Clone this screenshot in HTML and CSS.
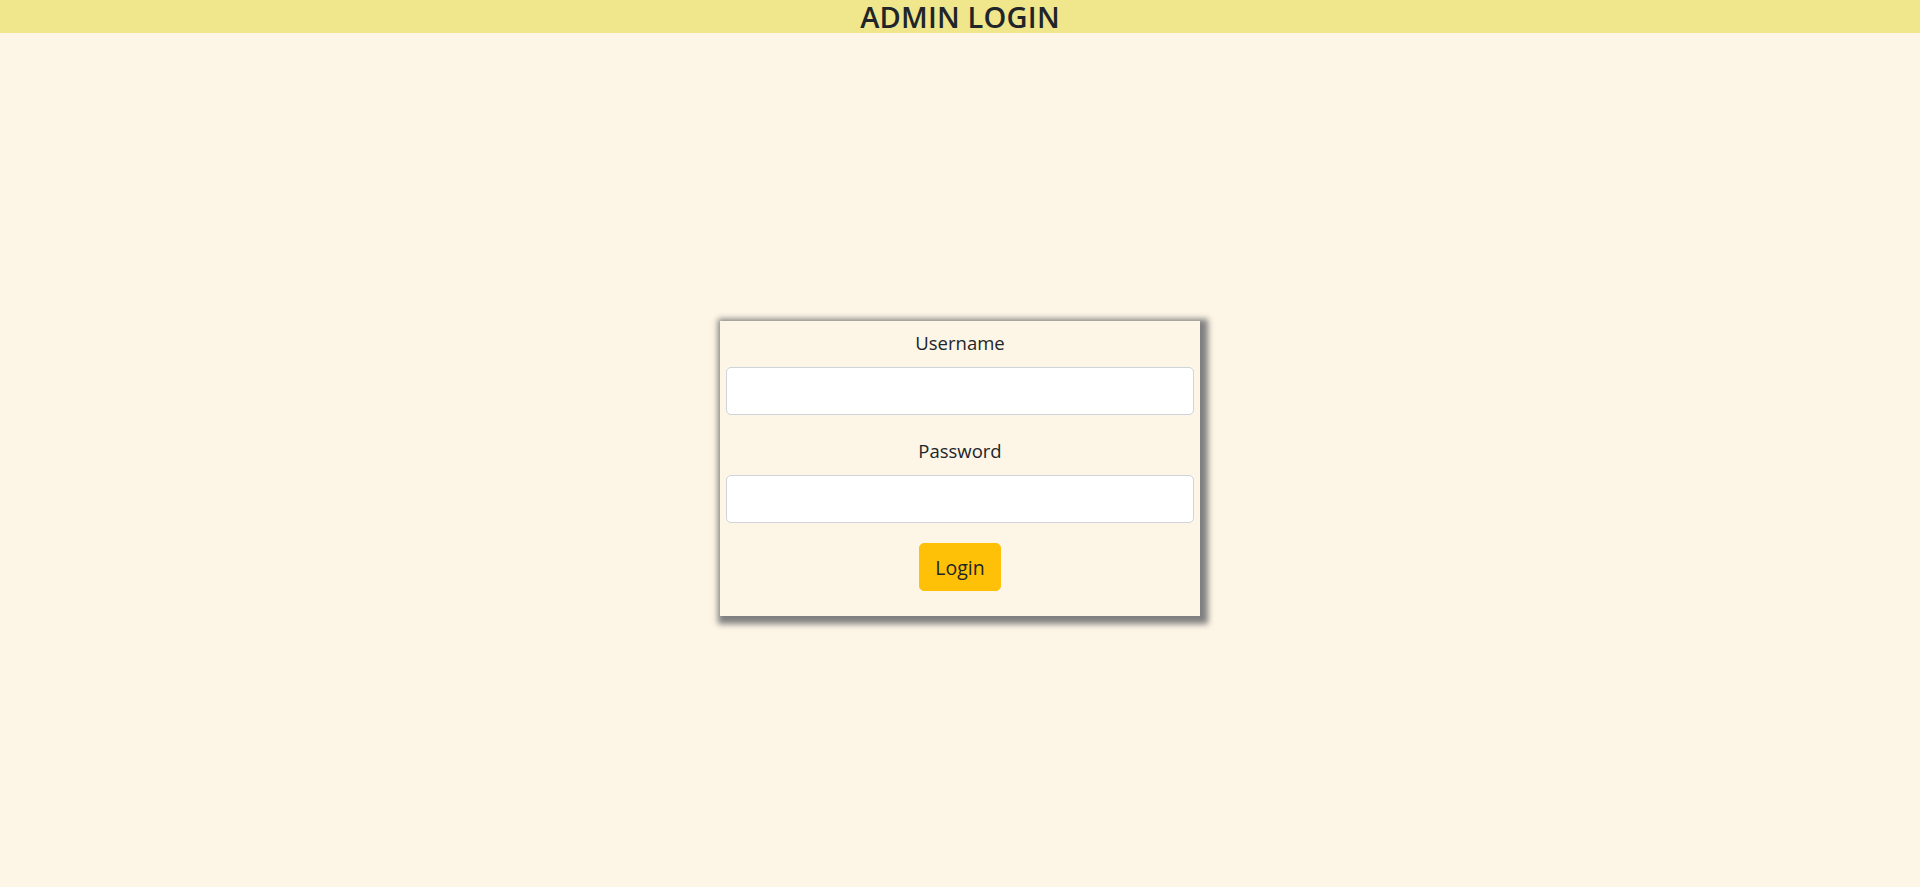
FILE: index.html
```html
<!DOCTYPE html>
<html lang="en">
<head>
<meta charset="utf-8">
<title>Admin Login</title>
<link rel="stylesheet" href="styles.css">
</head>
<body>
<header class="topbar">
  <h1 class="title">ADMIN LOGIN</h1>
</header>
<main class="stage">
  <form class="card">
    <div class="field">
      <label class="label" for="username">Username</label>
      <input class="input" id="username" type="text">
    </div>
    <div class="field">
      <label class="label" for="password">Password</label>
      <input class="input" id="password" type="password">
    </div>
    <div class="actions">
      <button class="btn" type="button">Login</button>
    </div>
  </form>
</main>
</body>
</html>
```

FILE: styles.css
```css
* { box-sizing: border-box; }
html, body { margin: 0; padding: 0; }
body {
  background: #fdf5e6;
  color: #212529;
  font-family: "Open Sans", "Noto Sans", sans-serif;
  min-height: 887px;
  display: flex;
  flex-direction: column;
}
.topbar {
  background: #f0e68c;
  height: 33px;
  display: flex;
  align-items: center;
  justify-content: center;
}
.title {
  margin: 0;
  font-size: 29px;
  font-weight: 600;
  line-height: 33px;
  letter-spacing: 0.2px;
}
.stage {
  flex: 1;
  display: flex;
  justify-content: center;
  padding-top: 288px;
}
.card {
  width: 480px;
  height: 295px;
  background: #fdf5e6;
  box-shadow: 3px 3px 6px 5px #808080;
  padding: 7px 6px 0;
}
.field { display: flex; flex-direction: column; }
.field + .field { margin-top: 21px; }
.label {
  text-align: center;
  font-size: 18.5px;
  line-height: 30px;
  margin-bottom: 9px;
}
.input {
  height: 48px;
  background: #fff;
  border: 1px solid #ced4da;
  border-radius: 5px;
  font-size: 20px;
  padding: 8px 16px;
  font-family: inherit;
}
.actions {
  display: flex;
  justify-content: center;
  margin-top: 20px;
}
.btn {
  height: 48px;
  width: 82px;
  background: #ffc107;
  border: 1px solid #ffc107;
  border-radius: 5px;
  color: #212529;
  font-family: inherit;
  font-size: 19.5px;
  padding: 0;
}
```
